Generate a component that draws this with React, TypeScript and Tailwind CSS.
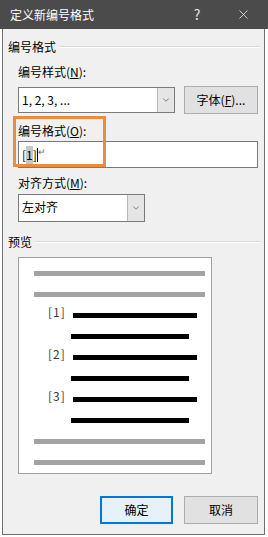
import React from "react";
import { ChevronDown, X } from "lucide-react";

function GroupLabel({ text }: { text: string }) {
  return (
    <div className="flex items-center gap-[3px] leading-[16px] -mr-[2px]">
      <span>{text}</span>
      <div className="flex-1 h-[2px] border-t border-[#d9d9d9] border-b-white border-b" />
    </div>
  );
}

function Combo({ value, width }: { value: string; width: string }) {
  return (
    <div className={`${width} h-full flex bg-white border border-[#7a7a7a]`}>
      <span className="flex-1 pl-[3px] leading-[24px]">{value}</span>
      <div className="w-[17px] flex items-center justify-center bg-[#e5e5e5] border-l border-[#b9b9b9]">
        <ChevronDown size={10} strokeWidth={1.5} className="text-[#404040]" />
      </div>
    </div>
  );
}

function Bar({ kind, label }: { kind: "gray" | "main" | "sub"; label?: string }) {
  if (kind === "gray") {
    return (
      <div className="h-[5px] flex">
        <div className="ml-[15px] w-[171px] bg-[#a3a3a3]" />
      </div>
    );
  }
  if (kind === "sub") {
    return (
      <div className="h-[5px] flex">
        <div className="ml-[52px] w-[118px] bg-black" />
      </div>
    );
  }
  return (
    <div className="h-[5px] flex items-center">
      <span className="ml-[29px] w-[25px] mb-[7px] text-[#3a3a3a] leading-[16px] tracking-[1px]">{label}</span>
      <div className="w-[124px] h-[5px] bg-black" />
    </div>
  );
}

export default function App() {
  return (
    <div className="w-[268px] h-[537px] bg-white overflow-hidden font-['Noto_Sans_CJK_SC',sans-serif] text-[12px] text-black">
      {/* Title bar */}
      <div className="h-[29px] bg-[#4b4b4b] flex items-center pl-[10px] pr-[2px] text-white">
        <span className="flex-1">定义新编号格式</span>
        <span className="w-[46px] text-center text-[14px] text-[#e6e6e6]">?</span>
        <span className="w-[46px] flex justify-center text-[#e6e6e6]">
          <X size={15} strokeWidth={1.3} />
        </span>
      </div>

      <div className="relative ml-[2px] w-[263px] h-[506px] bg-[#f0f0f0] border-x border-b border-[#707070] pl-[5px] pr-[6px] pt-[10px]">
        <GroupLabel text="编号格式" />

        <div className="pl-[10px]">
          <div className="mt-[9px] leading-[16px]">
            编号样式(<span className="underline">N</span>):
          </div>
          <div className="mt-[6px] h-[28px] flex items-center gap-[9px]">
            <div className="h-[26px]">
              <Combo value="1, 2, 3, ..." width="w-[157px]" />
            </div>
            <button className="w-[74px] h-[28px] bg-[#e1e1e1] border border-[#adadad]">
              字体(<span className="underline">F</span>)...
            </button>
          </div>

          <div className="mt-[9px] leading-[16px]">
            编号格式(<span className="underline">O</span>):
          </div>
          <div className="mt-[2px] w-[240px] h-[27px] bg-white border border-[#7a7a7a] flex items-center pl-[3px]">
            <span>[</span>
            <span className="bg-[#c6c6c6]">1</span>
            <span>]</span>
            <span className="w-px h-[14px] bg-black" />
            <span className="text-[9px] text-[#6a6a6a] relative -top-[3px]">↵</span>
          </div>

          <div className="mt-[7px] leading-[16px]">
            对齐方式(<span className="underline">M</span>):
          </div>
          <div className="mt-[3px] h-[28px]">
            <Combo value="左对齐" width="w-[127px]" />
          </div>
        </div>

        <div className="mt-[12px]">
          <GroupLabel text="预览" />
        </div>

        <div className="mt-[7px] ml-[10px] w-[194px] h-[217px] bg-white border border-[#a0a0a0] pt-[13px] flex flex-col gap-[16px]">
          <Bar kind="gray" />
          <Bar kind="gray" />
          <Bar kind="main" label="[1]" />
          <Bar kind="sub" />
          <Bar kind="main" label="[2]" />
          <Bar kind="sub" />
          <Bar kind="main" label="[3]" />
          <Bar kind="sub" />
          <Bar kind="gray" />
          <Bar kind="gray" />
        </div>

        <div className="mt-[22px] flex justify-end gap-[11px]">
          <button className="w-[73px] h-[28px] bg-[#e5f1fb] border-2 border-[#0078d7]">确定</button>
          <button className="w-[74px] h-[28px] bg-[#e1e1e1] border border-[#adadad]">取消</button>
        </div>

        {/* orange annotation frame */}
        <div className="absolute left-[10px] top-[87px] w-[93px] h-[51px] border-[3px] border-[#ea8c3b]" />
      </div>
    </div>
  );
}
